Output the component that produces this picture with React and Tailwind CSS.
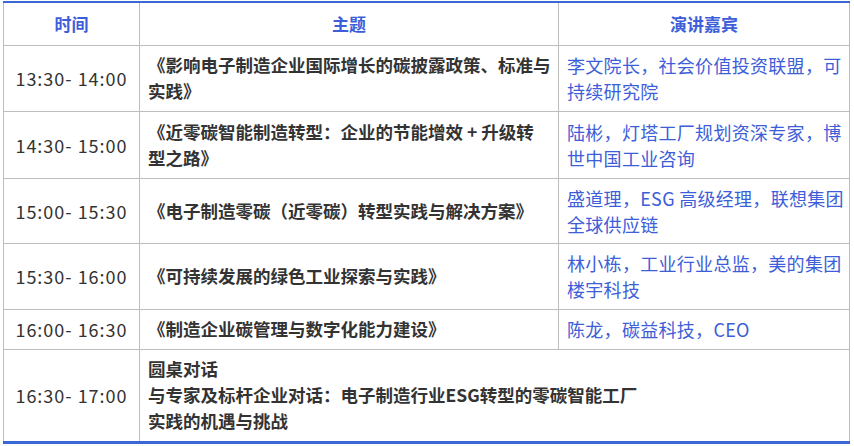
import React from "react";

const rows = [
  { time: "13:30- 14:00", title: ["《影响电子制造企业国际增长的碳披露政策、标准与", "实践》"], speaker: ["李文院长，社会价值投资联盟，可", "持续研究院"], h: "h-[66px]" },
  { time: "14:30- 15:00", title: ["《近零碳智能制造转型：企业的节能增效 + 升级转", "型之路》"], speaker: ["陆彬，灯塔工厂规划资深专家，博", "世中国工业咨询"], h: "h-[67px]" },
  { time: "15:00- 15:30", title: ["《电子制造零碳（近零碳）转型实践与解决方案》"], speaker: ["盛道理，ESG 高级经理，联想集团", "全球供应链"], h: "h-[65px]" },
  { time: "15:30- 16:00", title: ["《可持续发展的绿色工业探索与实践》"], speaker: ["林小栋，工业行业总监，美的集团", "楼宇科技"], h: "h-[66px]" },
  { time: "16:00- 16:30", title: ["《制造企业碳管理与数字化能力建设》"], speaker: ["陈龙，碳益科技，CEO"], h: "h-[40px]" },
];

export default function App() {
  return (
    <div className="w-[854px] h-[446px] bg-white pt-px pl-[3px]" style={{ fontFamily: '"Noto Sans CJK SC", "Noto Sans", sans-serif' }}>
      <table className="w-[846px] border-collapse table-fixed text-[17px] leading-[26px]">
        <colgroup>
          <col className="w-[136px]" />
          <col className="w-[419px]" />
          <col className="w-[291px]" />
        </colgroup>
        <thead>
          <tr className="h-[43px] border-t-2 border-t-[#3a66d6]">
            <th className="border-l border-r border-b border-[#bdbdbd] text-[#3d5ed8] font-bold text-center align-middle">时间</th>
            <th className="border-r border-b border-[#bdbdbd] text-[#3d5ed8] font-bold text-center align-middle">主题</th>
            <th className="border-r border-b border-[#bdbdbd] text-[#3d5ed8] font-bold text-center align-middle">演讲嘉宾</th>
          </tr>
        </thead>
        <tbody>
          {rows.map((r) => (
            <tr key={r.time} className={r.h}>
              <td className="border border-[#bdbdbd] text-center align-middle text-[#333] text-[18px] tracking-[1px] whitespace-nowrap">{r.time}</td>
              <td className="border border-[#bdbdbd] px-2 align-middle text-[#333] font-bold text-[17.5px] whitespace-nowrap">
                {r.title.map((t) => (
                  <div key={t}>{t}</div>
                ))}
              </td>
              <td className="border border-[#bdbdbd] px-2 align-middle text-[#3d5ed8] text-[18px] tracking-[0.3px] whitespace-nowrap">
                {r.speaker.map((t) => (
                  <div key={t}>{t}</div>
                ))}
              </td>
            </tr>
          ))}
          <tr className="h-[93px] border-b-[3px] border-b-[#3a66d6]">
            <td className="border-l border-r border-[#bdbdbd] text-center align-middle text-[#333] text-[18px] tracking-[1px] whitespace-nowrap">16:30- 17:00</td>
            <td colSpan={2} className="border-r border-[#bdbdbd] px-2 align-middle text-[#333] font-bold text-[17.5px] whitespace-nowrap">
              <div>圆桌对话</div>
              <div>与专家及标杆企业对话：电子制造行业ESG转型的零碳智能工厂</div>
              <div>实践的机遇与挑战</div>
            </td>
          </tr>
        </tbody>
      </table>
    </div>
  );
}
